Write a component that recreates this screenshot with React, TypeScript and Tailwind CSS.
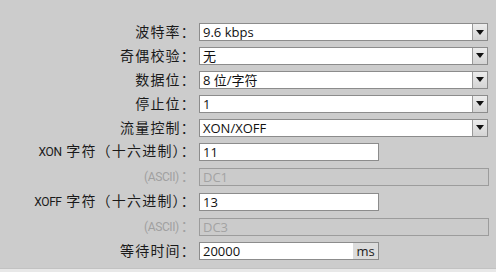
import React from 'react';

type Row =
  | { label: string; kind: 'select'; value: string }
  | { label: string; kind: 'input'; value: string }
  | { label: string; kind: 'ascii'; value: string }
  | { label: string; kind: 'unit'; value: string; unit: string };

const rows: Row[] = [
  { label: '波特率：', kind: 'select', value: '9.6 kbps' },
  { label: '奇偶校验：', kind: 'select', value: '无' },
  { label: '数据位：', kind: 'select', value: '8 位/字符' },
  { label: '停止位：', kind: 'select', value: '1' },
  { label: '流量控制：', kind: 'select', value: 'XON/XOFF' },
  { label: 'XON 字符（十六进制）：', kind: 'input', value: '11' },
  { label: '(ASCII)：', kind: 'ascii', value: 'DC1' },
  { label: 'XOFF 字符（十六进制）：', kind: 'input', value: '13' },
  { label: '(ASCII)：', kind: 'ascii', value: 'DC3' },
  { label: '等待时间：', kind: 'unit', value: '20000', unit: 'ms' },
];

const font = { fontFamily: '"Open Sans", "Noto Sans CJK SC", sans-serif' };

// Latin runs in the labels are set smaller and tighter than the CJK text
function Label({ text }: { text: string }) {
  const parts = text.split(/([A-Za-z()]+ ?)/).filter(Boolean);
  return (
    <>
      {parts.map((p, i) =>
        /[A-Za-z()]/.test(p) ? (
          <span
            key={i}
            className="text-[12px] tracking-[-0.4px] mr-[2px]"
            style={{ fontFamily: 'Roboto, "Noto Sans", sans-serif' }}
          >
            {p}
          </span>
        ) : (
          <span key={i}>{p}</span>
        )
      )}
    </>
  );
}

function ArrowButton() {
  return (
    <div className="w-[15px] h-full flex items-center justify-center bg-gradient-to-b from-[#ececec] to-[#d4d4d4] border-l border-[#9a9a9a]">
      <svg width="8" height="5" viewBox="0 0 8 5">
        <path d="M0 0 H8 L4 5 Z" fill="#111" />
      </svg>
    </div>
  );
}

function Field({ row }: { row: Row }) {
  if (row.kind === 'select') {
    return (
      <div className="w-[289px] h-[18px] flex border border-[#8c8c8c] bg-white">
        <div className="flex-1 px-[3px] text-[13px] leading-[16px] text-[#111]">{row.value}</div>
        <ArrowButton />
      </div>
    );
  }
  if (row.kind === 'input') {
    return (
      <div className="w-[180px] h-[18px] border border-[#8c8c8c] bg-white px-[3px] text-[13px] leading-[16px] text-[#111]">
        {row.value}
      </div>
    );
  }
  if (row.kind === 'ascii') {
    return (
      <div className="w-[290px] h-[18px] border border-[#9c9c9c] bg-[#cbcbcb] px-[3px] text-[13px] leading-[16px] text-[#a3a3a3]">
        {row.value}
      </div>
    );
  }
  return (
    <div className="w-[180px] h-[18px] flex border border-[#8c8c8c] bg-white text-[13px] leading-[16px] text-[#111]">
      <div className="flex-1 px-[3px]">{row.value}</div>
      <div className="w-[25px] bg-[#dcdcdc] text-center text-[#222]">{row.unit}</div>
    </div>
  );
}

export default function App() {
  return (
    <div className="w-[496px] h-[272px] bg-[#cccccc] flex flex-col" style={font}>
      <div className="flex-1 pt-[23px]">
        <div className="grid grid-cols-[196px_1fr] gap-x-[3px] gap-y-[5.9px] items-center">
          {rows.map((row, i) => (
            <div
              key={i}
              className="contents"
            >
              <div
                className={`text-right text-[14px] tracking-[1.2px] leading-[18px] whitespace-nowrap ${
                  row.kind === 'ascii' ? 'text-[#a0a0a0]' : 'text-[#1a1a1a]'
                }`}
              >
                <Label text={row.label} />
              </div>
              <Field row={row} />
            </div>
          ))}
        </div>
      </div>
      <div className="h-[4px] border-t border-[#c2c2c2] bg-[#e8e8e8]" />
    </div>
  );
}
